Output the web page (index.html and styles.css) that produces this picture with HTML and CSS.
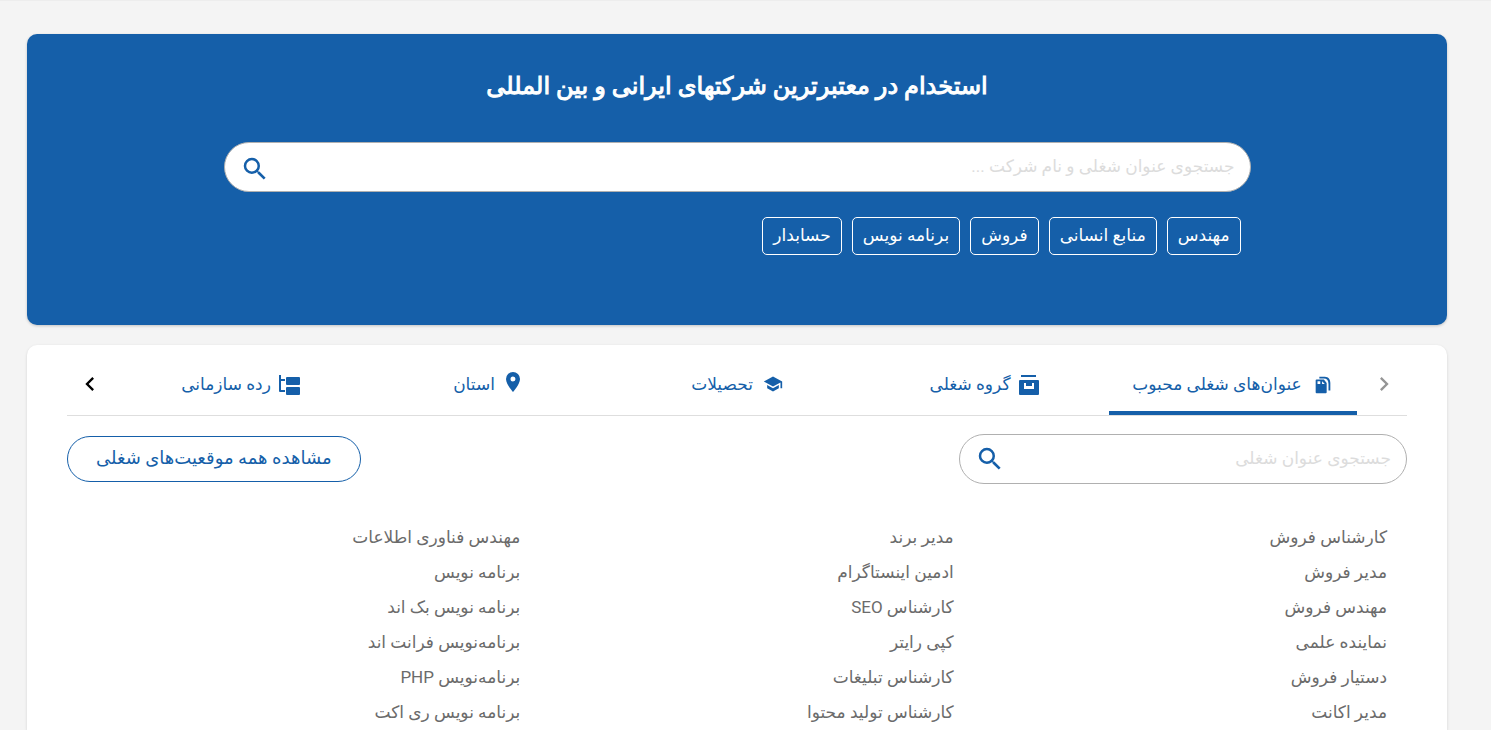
FILE: index.html
```html
<!DOCTYPE html>
<html lang="fa" dir="rtl">
<head>
<meta charset="utf-8">
<meta name="viewport" content="width=device-width, initial-scale=1">
<title>استخدام</title>
<link rel="stylesheet" href="styles.css">
</head>
<body>
<main class="page">
  <section class="hero">
    <h1 class="hero-title">استخدام در معتبرترین شرکتهای ایرانی و بین المللی</h1>
    <div class="hero-inner">
      <form class="search search-hero">
        <input class="search-input" type="text" aria-label="جستجوی عنوان شغلی و نام شرکت" placeholder="جستجوی عنوان شغلی و نام شرکت ...">
        <button class="search-button" type="button" aria-label="جستجو"><svg class="icon-search" viewBox="0 0 24 24"><path d="M15.5 14h-.79l-.28-.27A6.47 6.47 0 0 0 16 9.5 6.5 6.5 0 1 0 9.5 16c1.61 0 3.09-.59 4.23-1.57l.27.28v.79l5 4.99L20.49 19l-4.99-5zm-6 0a4.5 4.5 0 1 1 0-9 4.5 4.5 0 0 1 0 9z"/></svg></button>
      </form>
      <nav class="tags">
        <a class="tag" href="#">مهندس</a>
        <a class="tag" href="#">منابع انسانی</a>
        <a class="tag" href="#">فروش</a>
        <a class="tag" href="#">برنامه نویس</a>
        <a class="tag" href="#">حسابدار</a>
      </nav>
    </div>
  </section>
  <section class="panel">
    <div class="tabs">
      <button class="arrow arrow-prev" type="button" aria-label="قبلی"><svg viewBox="0 0 24 24"><path d="M10 6 8.59 7.41 13.17 12l-4.58 4.59L10 18l6-6z"/></svg></button>
      <div class="tab-list">
        <button class="tab tab-active" type="button"><svg class="tab-icon" viewBox="0 0 24 24"><path fill-rule="evenodd" d="M5 7h8l3 4v10a1 1 0 0 1-1 1H5a1 1 0 0 1-1-1V8a1 1 0 0 1 1-1zm1 2v3h3V9zm5 0v3h3z"/><path d="M8 4h6c4 0 6 3 6 7v8h-2v-7c0-4-2-6-5-6H8z"/></svg>عنوان‌های شغلی محبوب</button>
        <button class="tab" type="button"><svg class="tab-icon icon-large" viewBox="0 0 24 24"><path d="M4 3h15v2H4z"/><path fill-rule="evenodd" d="M3 8h18a1 1 0 0 1 1 1v13a1 1 0 0 1-1 1H3a1 1 0 0 1-1-1V9a1 1 0 0 1 1-1zm4 3v6h10v-6h-2v3H9v-3z"/></svg>گروه شغلی</button>
        <button class="tab" type="button"><svg class="tab-icon icon-small" viewBox="0 0 24 24"><path d="M5 13.18v4L12 21l7-3.82v-4L12 17zM12 3 1 9l11 6 9-4.91V17h2V9z"/></svg>تحصیلات</button>
        <button class="tab" type="button"><svg class="tab-icon icon-pin" viewBox="0 0 24 24"><path d="M12 2a7 7 0 0 0-7 7c0 5.25 7 13 7 13s7-7.75 7-13a7 7 0 0 0-7-7zm0 9.500a2.500 2.500 0 1 1 0-5 2.500 2.500 0 0 1 0 5z"/></svg>استان</button>
        <button class="tab" type="button"><svg class="tab-icon icon-large" viewBox="0 0 24 24"><path d="M2 3h2v4h4v2H4v9h4v2H3a1 1 0 0 1-1-1z"/><rect x="9" y="5" width="14" height="8" rx="1"/><rect x="9" y="15" width="14" height="8" rx="1"/></svg>رده سازمانی</button>
      </div>
      <button class="arrow arrow-next" type="button" aria-label="بعدی"><svg viewBox="0 0 24 24"><path d="M15.41 7.41 14 6l-6 6 6 6 1.41-1.41L10.83 12z"/></svg></button>
    </div>
    <div class="toolbar">
      <form class="search search-panel">
        <input class="search-input" type="text" aria-label="جستجوی عنوان شغلی" placeholder="جستجوی عنوان شغلی">
        <button class="search-button" type="button" aria-label="جستجو"><svg class="icon-search" viewBox="0 0 24 24"><path d="M15.5 14h-.79l-.28-.27A6.47 6.47 0 0 0 16 9.5 6.5 6.5 0 1 0 9.5 16c1.61 0 3.09-.59 4.23-1.57l.27.28v.79l5 4.99L20.49 19l-4.99-5zm-6 0a4.5 4.5 0 1 1 0-9 4.5 4.5 0 0 1 0 9z"/></svg></button>
      </form>
      <a class="all-jobs" href="#">مشاهده همه موقعیت‌های شغلی</a>
    </div>
    <div class="jobs">
      <ul class="job-list">
        <li><a href="#">کارشناس فروش</a></li>
        <li><a href="#">مدیر فروش</a></li>
        <li><a href="#">مهندس فروش</a></li>
        <li><a href="#">نماینده علمی</a></li>
        <li><a href="#">دستیار فروش</a></li>
        <li><a href="#">مدیر اکانت</a></li>
      </ul>
      <ul class="job-list">
        <li><a href="#">مدیر برند</a></li>
        <li><a href="#">ادمین اینستاگرام</a></li>
        <li><a href="#">کارشناس SEO</a></li>
        <li><a href="#">کپی رایتر</a></li>
        <li><a href="#">کارشناس تبلیغات</a></li>
        <li><a href="#">کارشناس تولید محتوا</a></li>
      </ul>
      <ul class="job-list">
        <li><a href="#">مهندس فناوری اطلاعات</a></li>
        <li><a href="#">برنامه نویس</a></li>
        <li><a href="#">برنامه نویس بک اند</a></li>
        <li><a href="#">برنامه‌نویس فرانت اند</a></li>
        <li><a href="#">برنامه‌نویس PHP</a></li>
        <li><a href="#">برنامه نویس ری اکت</a></li>
      </ul>
    </div>
  </section>
</main>
</body>
</html>
```
FILE: styles.css
```css
* { box-sizing: border-box; }
html { scrollbar-width: none; }
body {
  margin: 0;
  background: #f4f4f4;
  color: #6b6b6b;
  font-family: Roboto, "DejaVu Sans", sans-serif;
  font-size: 17px;
}
a { color: inherit; text-decoration: none; }
button, input { font: inherit; }
button { border: 0; padding: 0; background: none; cursor: pointer; }
svg { display: block; fill: currentColor; }
.page { border-top: 1px solid #ededed; padding: 33px 44px 0 27px; display: grid; gap: 20px; }
.hero {
  min-height: 291px;
  padding: 32px 40px;
  border-radius: 10px;
  background: #155fa9;
  color: #fff;
  box-shadow: 0 1px 3px rgba(0, 0, 0, 0.2);
}
.hero-title { margin: 0 0 36px; font-size: 24px; line-height: 40px; font-weight: 500; text-align: center; -webkit-text-stroke: 1px #fff; }
.hero-inner { max-width: 1027px; margin: 0 auto; }
.search {
  display: flex;
  align-items: center;
  height: 50px;
  border: 1px solid #b0b0b0;
  border-radius: 25px;
  background: #fff;
  overflow: hidden;
}
.search-input { flex: 1; min-width: 0; height: 100%; padding: 0 15px 2px; border: 0; outline: 0; background: none; }
.search-input::placeholder { color: #dcdcdc; opacity: 1; }
.search-button { padding: 0 15px; color: #155fa9; }
.search-hero .search-button { padding-top: 4px; }
.icon-search { width: 30px; height: 30px; }
.tags { display: flex; flex-wrap: wrap; gap: 10px; margin: 25px 10px 0; }
.tag { height: 38px; padding: 0 10px; border: 1px solid #fff; border-radius: 5px; line-height: 34px; }
.panel {
  padding: 8px 40px 0;
  border-radius: 10px 10px 0 0;
  background: #fff;
  box-shadow: 0 1px 3px rgba(0, 0, 0, 0.14);
}
.tabs { display: flex; align-items: stretch; height: 63px; border-bottom: 1px solid #dedede; }
.arrow { width: 46px; color: #000; display: grid; place-items: center; }
.arrow svg { width: 28px; height: 28px; }
.arrow-prev { color: #959595; }
.tab-list { flex: 1; display: flex; margin: 0 4px; }
.tab { flex: 1; display: flex; align-items: center; justify-content: center; gap: 10px; color: #155fa9; white-space: nowrap; }
.tab-active { box-shadow: inset 0 -4px #155fa9; }
.tab-icon { width: 22px; height: 22px; }
.icon-small { width: 20px; height: 20px; }
.icon-large { width: 24px; height: 24px; margin-inline-end: -4px; }
.icon-pin { width: 24px; height: 24px; margin-inline-end: -4px; margin-bottom: 4px; }
.toolbar { display: flex; justify-content: space-between; align-items: center; margin-top: 18px; }
.search-panel { width: 448px; }
.all-jobs { height: 46px; padding: 0 28px; border: 1px solid #155fa9; border-radius: 23px; font-size: 18px; line-height: 42px; color: #155fa9; }
.jobs { display: grid; grid-template-columns: repeat(3, 1fr); padding: 36px 20px 0; }
.job-list { margin: 0; padding: 0; list-style: none; line-height: 35px; }
```
